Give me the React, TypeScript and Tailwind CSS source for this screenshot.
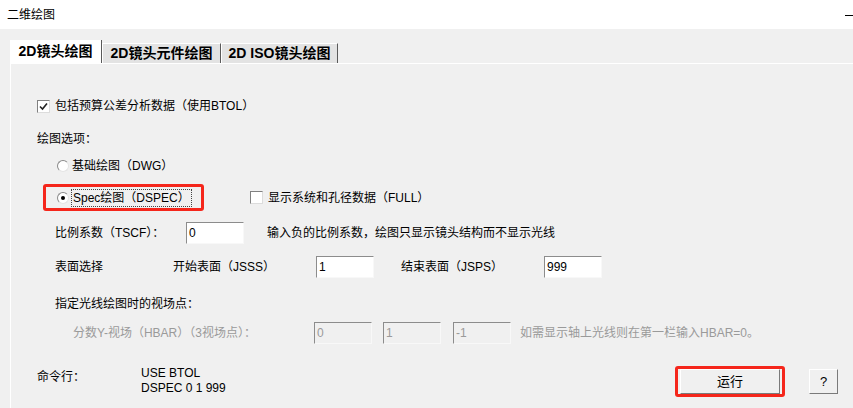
import React from "react";

const font = { fontFamily: '"Liberation Sans", "Noto Sans CJK SC", sans-serif' };

function Checkbox({ checked }: { checked?: boolean }) {
  return (
    <span className="inline-flex h-[13px] w-[13px] items-center justify-center border border-t-[#808080] border-l-[#808080] border-b-[#dcdcdc] border-r-[#dcdcdc] bg-white">
      {checked && (
        <svg width="9" height="9" viewBox="0 0 9 9">
          <path d="M1 4.5 L3.5 7 L8 1.5" fill="none" stroke="#222" strokeWidth="1.6" />
        </svg>
      )}
    </span>
  );
}

function Radio({ checked }: { checked?: boolean }) {
  return (
    <span className="inline-flex h-[12px] w-[12px] items-center justify-center rounded-full border border-t-[#8a8a8a] border-l-[#8a8a8a] border-b-[#e4e4e4] border-r-[#e4e4e4] bg-white">
      {checked && <span className="h-[4px] w-[4px] rounded-full bg-black" />}
    </span>
  );
}

function Field({ value, disabled }: { value: string; disabled?: boolean }) {
  return (
    <div
      className={`flex h-[22px] w-[58px] items-center border border-t-[#8c8c8c] border-l-[#8c8c8c] border-b-[#f8f8f8] border-r-[#f8f8f8] pl-[2px] text-[12px] ${
        disabled ? "bg-[#f0f0f0] text-[#9a9a9a]" : "bg-white text-black"
      }`}
    >
      {value}
    </div>
  );
}

export default function App() {
  return (
    <div className="relative h-[408px] w-[853px] overflow-hidden bg-[#f0f0f0] text-[12px] text-black" style={font}>
      {/* title bar */}
      <div className="flex h-[29px] items-center justify-between bg-white pl-[7px]">
        <span className="text-[12px]">二维绘图</span>
        <span className="mt-[1px] h-[1px] w-[8px] bg-black" />
      </div>

      {/* tabs */}
      <div className="flex h-[34px] items-end pl-[10px]">
        <div className="flex h-[23px] w-[92px] items-center justify-center border-r border-r-[#5a5a5a] bg-white text-[14px] font-bold">
          2D镜头绘图
        </div>
        <div className="flex h-[20px] w-[119px] items-center justify-center border-t border-l border-r border-t-white border-l-white border-r-[#5a5a5a] bg-[#e3e3e3] text-[14px] font-bold">
          2D镜头元件绘图
        </div>
        <div className="flex h-[20px] w-[117px] items-center justify-center border-t border-l border-r border-t-white border-l-white border-r-[#5a5a5a] bg-[#e3e3e3] text-[14px] font-bold">
          2D ISO镜头绘图
        </div>
      </div>

      {/* panel */}
      <div className="ml-[10px] h-[346px] border-l border-t border-l-white border-t-white">
        <div className="ml-[26px] mt-[32px] flex h-[20px] items-center gap-[5px]">
          <Checkbox checked />
          <span>包括预算公差分析数据（使用BTOL）</span>
        </div>

        <div className="ml-[26px] mt-[13px] flex h-[20px] items-center">绘图选项：</div>

        <div className="ml-[46px] mt-[7px] flex h-[20px] items-center gap-[3px]">
          <Radio />
          <span>基础绘图（DWG）</span>
        </div>

        <div className="mt-[8px] flex h-[27px] items-center">
          <div className="ml-[32px] flex h-[27px] w-[161px] items-center rounded-[3px] border-[3px] border-[#f5261b] pl-[11px]">
            <Radio checked />
            <span className="ml-[2px] border border-dotted border-[#444] px-[1px] leading-[16px]">Spec绘图（DSPEC）</span>
          </div>
          <div className="ml-[46px] flex items-center gap-[5px]">
            <Checkbox />
            <span>显示系统和孔径数据（FULL）</span>
          </div>
        </div>

        <div className="mt-[11px] flex h-[22px] items-center">
          <span className="ml-[44px] w-[131px]">比例系数（TSCF）：</span>
          <Field value="0" />
          <span className="ml-[23px]">输入负的比例系数，绘图只显示镜头结构而不显示光线</span>
        </div>

        <div className="mt-[12px] flex h-[22px] items-center">
          <span className="ml-[44px] w-[118px]">表面选择</span>
          <span className="w-[143px]">开始表面（JSSS）</span>
          <Field value="1" />
          <span className="ml-[27px] w-[143px]">结束表面（JSPS）</span>
          <Field value="999" />
        </div>

        <div className="ml-[44px] mt-[16px] flex h-[20px] items-center">指定光线绘图时的视场点：</div>

        <div className="mt-[8px] flex h-[22px] items-center text-[#9a9a9a]">
          <span className="ml-[62px] w-[241px]">分数Y-视场（HBAR）（3视场点）：</span>
          <Field value="0" disabled />
          <span className="w-[11px]" />
          <Field value="1" disabled />
          <span className="w-[12px]" />
          <Field value="-1" disabled />
          <span className="ml-[9px]">如需显示轴上光线则在第一栏输入HBAR=0。</span>
        </div>

        <div className="mt-[22px] flex h-[31px] items-center">
          <span className="ml-[26px] w-[104px] self-start pt-[2px]">命令行：</span>
          <div className="flex w-[100px] flex-col self-start leading-[15px]">
            <span>USE BTOL</span>
            <span>DSPEC 0 1 999</span>
          </div>
          <div className="ml-[434px] flex h-[31px] w-[110px] items-center justify-center rounded-[3px] border-[3px] border-[#f5261b]">
            <div className="flex h-[25px] w-[100px] items-center justify-center border border-t-white border-l-white border-b-[#7a7a7a] border-r-[#7a7a7a] bg-[#f0f0f0] text-[13px]">
              运行
            </div>
          </div>
          <div className="ml-[24px] flex h-[25px] w-[29px] items-center justify-center border border-t-white border-l-white border-b-[#7a7a7a] border-r-[#7a7a7a] bg-[#f0f0f0] text-[13px]">
            ?
          </div>
        </div>
      </div>
    </div>
  );
}
